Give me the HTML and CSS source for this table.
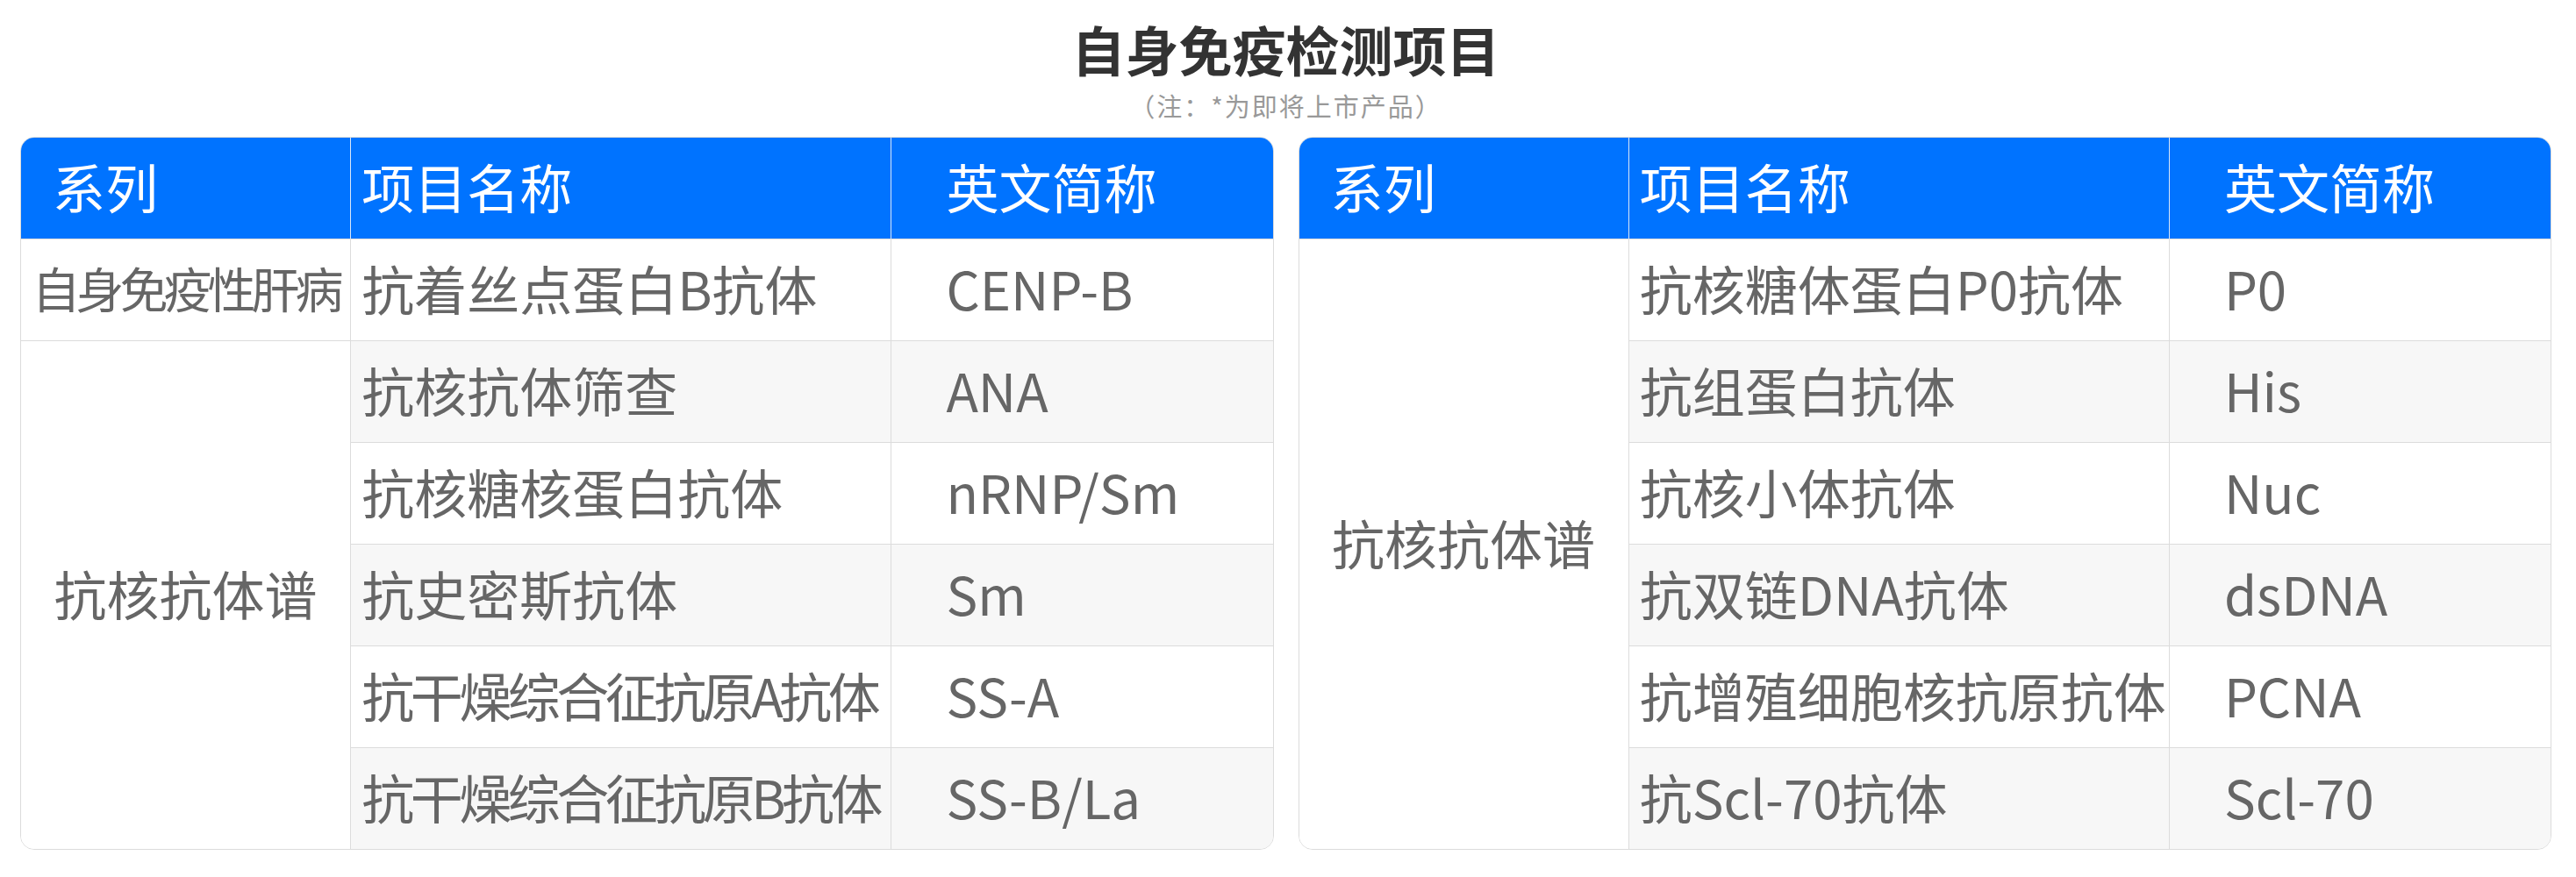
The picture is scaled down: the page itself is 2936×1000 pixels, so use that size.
FILE: index.html
```html
<!DOCTYPE html>
<html lang="zh-CN">
<head>
  <meta charset="UTF-8" />
  <title>自身免疫检测项目</title>
  <link rel="stylesheet" href="styles.css">
</head>
<body>
  <div class="page">
    <h1 class="title">自身免疫检测项目</h1>
    <p class="note">（注：*为即将上市产品）</p>
    <div class="tables">
      <table class="items">
        <colgroup><col class="c1"><col class="c2"><col class="c3"></colgroup>
        <thead>
          <tr><th class="series">系列</th><th class="name">项目名称</th><th class="abbr">英文简称</th></tr>
        </thead>
        <tbody>
          <tr><td class="series tight">自身免疫性肝病</td><td class="name">抗着丝点蛋白B抗体</td><td class="abbr">CENP-B</td></tr>
          <tr class="alt"><td class="series" rowspan="5">抗核抗体谱</td><td class="name">抗核抗体筛查</td><td class="abbr">ANA</td></tr>
          <tr><td class="name">抗核糖核蛋白抗体</td><td class="abbr">nRNP/Sm</td></tr>
          <tr class="alt"><td class="name">抗史密斯抗体</td><td class="abbr">Sm</td></tr>
          <tr><td class="name long">抗干燥综合征抗原A抗体</td><td class="abbr">SS-A</td></tr>
          <tr class="alt"><td class="name long">抗干燥综合征抗原B抗体</td><td class="abbr">SS-B/La</td></tr>
        </tbody>
      </table>
      <table class="items">
        <colgroup><col class="c1"><col class="c2"><col class="c3"></colgroup>
        <thead>
          <tr><th class="series">系列</th><th class="name">项目名称</th><th class="abbr">英文简称</th></tr>
        </thead>
        <tbody>
          <tr><td class="series" rowspan="6">抗核抗体谱</td><td class="name">抗核糖体蛋白P0抗体</td><td class="abbr">P0</td></tr>
          <tr class="alt"><td class="name">抗组蛋白抗体</td><td class="abbr">His</td></tr>
          <tr><td class="name">抗核小体抗体</td><td class="abbr">Nuc</td></tr>
          <tr class="alt"><td class="name">抗双链DNA抗体</td><td class="abbr">dsDNA</td></tr>
          <tr><td class="name">抗增殖细胞核抗原抗体</td><td class="abbr">PCNA</td></tr>
          <tr class="alt"><td class="name">抗Scl-70抗体</td><td class="abbr">Scl-70</td></tr>
        </tbody>
      </table>
    </div>
  </div>
</body>
</html>
```
FILE: styles.css
```css
* { box-sizing: border-box; }
html, body {
  margin: 0;
  padding: 0;
  background: #fff;
  font-family: "Noto Sans CJK SC", "Noto Sans", sans-serif;
}
.page {
  padding: 0 28px 0 23px;
}
.title {
  margin: 0;
  padding-top: 25px;
  font-size: 61px;
  line-height: 1;
  font-weight: bold;
  color: #333;
  text-align: center;
}
.note {
  margin: 20px 0 0;
  font-size: 29px;
  line-height: 1;
  letter-spacing: 2px;
  color: #999;
  text-align: center;
}
.tables {
  display: flex;
  gap: 28px;
  margin-top: 21px;
}
.items {
  flex: 1;
  table-layout: fixed;
  border-collapse: separate;
  border-spacing: 0;
  border: 1px solid #dcdcdc;
  border-radius: 16px;
  overflow: hidden;
  color: #666;
  font-size: 60px;
}
.c1 { width: 26.3%; }
.c2 { width: 43.2%; }
.c3 { width: 30.5%; }
.items th {
  height: 115px;
  padding-bottom: 8px;
  background: #0073ff;
  color: #fff;
  font-weight: normal;
  text-align: left;
  white-space: nowrap;
  border-left: 1px solid #d8e6f8;
}
.items th:first-child { border-left: none; }
.items td {
  height: 116px;
  padding-bottom: 8px;
  border-left: 1px solid #dcdcdc;
  border-top: 1px solid #dcdcdc;
  white-space: nowrap;
  background: #fff;
}
.items tr.alt td { background: #f7f7f7; }
.items tr.alt td.series { background: #fff; }
.items td.series {
  border-left: none;
  text-align: center;
}
th.series { padding-left: 36px; }
th.name { padding-left: 12px; }
th.abbr { padding-left: 62px; }
td.name { padding-left: 12px; }
td.abbr { padding-left: 62px; }
.tight {
  font-size: 55px;
  letter-spacing: -5px;
}
.long { letter-spacing: -4.5px; }
```
